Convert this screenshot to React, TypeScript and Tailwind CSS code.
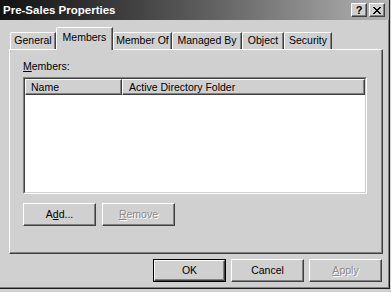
import type { ReactNode } from 'react'

// Win2k-style "Pre-Sales Properties" dialog, greyscale.

type BtnProps = {
  children: ReactNode
  disabled?: boolean
  isDefault?: boolean
}

function Button({ children, disabled, isDefault }: BtnProps) {
  const face = (
    <div
      className={`flex flex-1 items-center justify-center border-t border-l border-t-white border-l-white border-r border-b border-r-[#404040] border-b-[#404040] shadow-[inset_-1px_-1px_0_#808080] ${
        disabled ? 'text-[#8a8a8a] [text-shadow:1px_1px_0_#ffffff]' : 'text-black'
      }`}
    >
      {children}
    </div>
  )
  if (isDefault) {
    return <div className="flex h-[23px] w-[73px] border border-black">{face}</div>
  }
  return <div className="flex h-[23px] w-[73px]">{face}</div>
}

function Tab({ label, width, active }: { label: string; width: string; active?: boolean }) {
  if (active) {
    return (
      <div
        className={`${width} relative z-10 -mb-px flex h-[23px] justify-center rounded-tl-[2px] border-t border-l border-t-white border-l-white border-r border-r-[#404040] bg-[#d0d0d0] pt-[3px] shadow-[inset_-1px_0_0_#808080]`}
      >
        {label}
      </div>
    )
  }
  return (
    <div
      className={`${width} flex h-[17px] justify-center rounded-tl-[2px] border-t border-l border-t-white border-l-white border-r border-r-[#404040] pt-[1px] shadow-[inset_-1px_0_0_#808080]`}
    >
      {label}
    </div>
  )
}

function HeaderCell({ children, className }: { children: ReactNode; className: string }) {
  return (
    <div
      className={`${className} flex h-[16px] items-center border-t border-l border-t-white border-l-white border-r border-b border-r-[#404040] border-b-[#404040] shadow-[inset_-1px_-1px_0_#808080]`}
    >
      {children}
    </div>
  )
}

export default function App() {
  return (
    <div className="h-[292px] w-[391px] overflow-hidden bg-[#d0d0d0] font-['Liberation_Sans',Arial,sans-serif] text-[10.5px] leading-[13px] text-black">
      <div className="flex h-[289px] w-[390px] flex-col border-r border-b border-r-[#1c1c1c] border-b-[#1c1c1c] shadow-[inset_-1px_-1px_0_#808080]">
        {/* Title bar */}
        <div className="flex h-[20px] items-center justify-between bg-gradient-to-r from-[#121212] via-[#5a5a5a] to-[#b4b4b4] pl-[3px] pr-[4px]">
          <span className="text-[11.5px] font-bold text-white">Pre-Sales Properties</span>
          <div className="flex gap-[2px]">
            <div className="flex h-[14px] w-[16px] items-center justify-center border-t border-l border-t-white border-l-white border-r border-b border-r-[#404040] border-b-[#404040] bg-[#d0d0d0] text-[11px] font-bold leading-none shadow-[inset_-1px_-1px_0_#808080]">
              ?
            </div>
            <div className="flex h-[14px] w-[16px] items-center justify-center border-t border-l border-t-white border-l-white border-r border-b border-r-[#404040] border-b-[#404040] bg-[#d0d0d0] shadow-[inset_-1px_-1px_0_#808080]">
              <svg width="8" height="7" viewBox="0 0 8 7" shapeRendering="crispEdges">
                <path d="M0 0h2v1H0zM6 0h2v1H6zM1 1h2v1H1zM5 1h2v1H5zM2 2h4v1H2zM3 3h2v1H3zM2 4h4v1H2zM1 5h2v1H1zM5 5h2v1H5zM0 6h2v1H0zM6 6h2v1H6z" fill="#000" />
              </svg>
            </div>
          </div>
        </div>

        {/* Tabs */}
        <div className="mt-[7px] flex h-[22px] items-end pl-[10px]">
          <Tab label="General" width="w-[46px]" />
          <Tab label="Members" width="w-[57px]" active />
          <Tab label="Member Of" width="w-[59px]" />
          <Tab label="Managed By" width="w-[70px]" />
          <Tab label="Object" width="w-[42px]" />
          <Tab label="Security" width="w-[48px]" />
        </div>

        {/* Tab page */}
        <div className="ml-[9px] flex h-[205px] w-[374px] flex-col border-t border-l border-t-white border-l-white border-r border-b border-r-[#404040] border-b-[#404040] shadow-[inset_-1px_-1px_0_#808080]">
          <div className="ml-[13px] mt-[10px]">
            <u>M</u>embers:
          </div>

          <div className="ml-[13px] mt-[4px] h-[117px] w-[344px] border-t border-l border-t-[#808080] border-l-[#808080] border-r border-b border-r-white border-b-white">
            <div className="flex h-full flex-col border-t border-l border-t-[#404040] border-l-[#404040] border-r border-b border-r-[#d0d0d0] border-b-[#d0d0d0] bg-white">
              <div className="flex bg-[#d0d0d0]">
                <HeaderCell className="w-[97px] pl-[5px]">Name</HeaderCell>
                <HeaderCell className="flex-1 pl-[6px]">Active Directory Folder</HeaderCell>
              </div>
            </div>
          </div>

          <div className="ml-[13px] mt-[9px] flex gap-[6px]">
            <Button>
              A<u>d</u>d...
            </Button>
            <Button disabled>
              <u>R</u>emove
            </Button>
          </div>
        </div>

        {/* Dialog buttons */}
        <div className="ml-[153px] mt-[5px] flex gap-[5px]">
          <Button isDefault>OK</Button>
          <Button>Cancel</Button>
          <Button disabled>
            <u>A</u>pply
          </Button>
        </div>
      </div>
    </div>
  )
}
